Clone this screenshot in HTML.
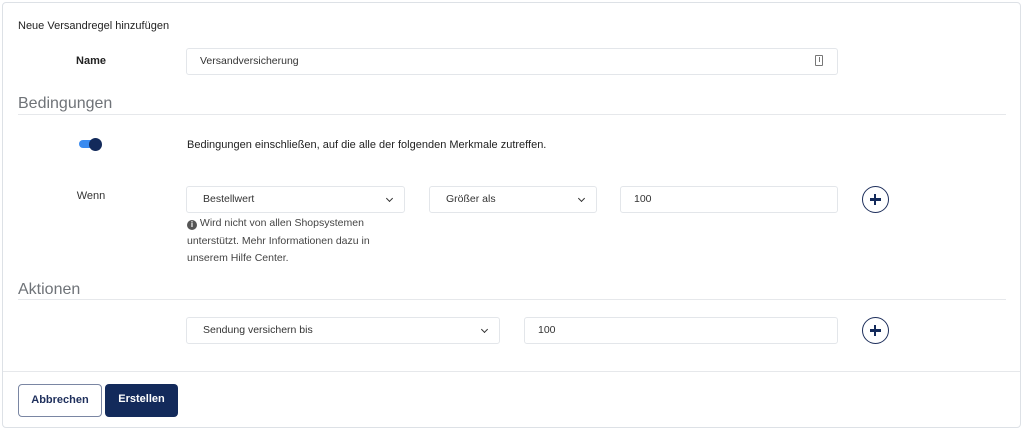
<!DOCTYPE html>
<html><head><meta charset="utf-8"><style>
*{box-sizing:border-box;margin:0;padding:0}
body{width:1024px;height:432px;background:#fff;font-family:"Liberation Sans",sans-serif;font-size:11px;color:#222;position:relative;overflow:hidden}
.a{position:absolute}
.frame{left:2px;top:2px;width:1019px;height:426px;border:1px solid #dde1e6;border-radius:4px}
.inp{position:absolute;border:1px solid #e3e6ea;border-radius:3px;background:#fff;height:27px;line-height:25px;padding-left:13px;font-size:10.5px;color:#333}
.sel{padding-left:16px}
.sel::after{content:"";position:absolute;right:12px;top:9px;width:4px;height:4px;border-right:1.5px solid #333;border-bottom:1.5px solid #333;transform:rotate(45deg)}
.lbl{font-weight:bold;font-size:11px;width:120px;text-align:center;left:31px}
.h{font-size:16px;color:#6f7378;left:18px}
.line{height:1px;background:#e6e8eb;left:18px;width:988px}
.plus{width:27px;height:27px;border:1.5px solid #1e2f5c;border-radius:50%}
.plus::before{content:"";position:absolute;left:6.5px;top:11px;width:11px;height:2.5px;background:#132a5b}
.plus::after{content:"";position:absolute;left:10.8px;top:6.8px;width:2.5px;height:11px;background:#132a5b}
.btn{height:33px;border-radius:4px;font-weight:bold;font-size:11px;text-align:center;line-height:31px}
</style></head><body>
<div class="a frame"></div>
<div class="a" style="left:18px;top:20px;font-size:11px">Neue Versandregel hinzufügen</div>
<div class="a lbl" style="top:55px">Name</div>
<div class="inp" style="left:186px;top:48px;width:652px">Versandversicherung</div>
<div class="a" style="left:815px;top:55px;width:8px;height:11px;border:1px solid #777;border-radius:1px"></div>
<div class="a" style="left:818.5px;top:57px;width:1px;height:5px;background:#777"></div>
<div class="a h" style="top:95px">Bedingungen</div>
<div class="a line" style="top:114px"></div>
<div class="a" style="left:79px;top:140px;width:22px;height:8px;border-radius:4px;background:#3a8bf0"></div>
<div class="a" style="left:89px;top:138px;width:13px;height:13px;border-radius:50%;background:#132a5b"></div>
<div class="a" style="left:187px;top:139px;font-size:11px">Bedingungen einschließen, auf die alle der folgenden Merkmale zutreffen.</div>
<div class="a lbl" style="top:190px;font-weight:normal;color:#333">Wenn</div>
<div class="inp sel" style="left:186px;top:186px;width:219px">Bestellwert</div>
<div class="inp sel" style="left:429px;top:186px;width:168px">Größer als</div>
<div class="inp" style="left:620px;top:186px;width:218px">100</div>
<div class="a plus" style="left:862px;top:186px"></div>
<div class="a" style="left:187px;top:215px;font-size:10.5px;line-height:17.5px;color:#444;width:220px"><span style="display:inline-block;width:10px;height:10px;border-radius:50%;background:#555;color:#fff;font-size:8px;line-height:10px;text-align:center;font-weight:bold;vertical-align:-1px">i</span> Wird nicht von allen Shopsystemen unterstützt. Mehr Informationen dazu in unserem Hilfe Center.</div>
<div class="a h" style="top:281px">Aktionen</div>
<div class="a line" style="top:299px"></div>
<div class="inp sel" style="left:186px;top:317px;width:314px">Sendung versichern bis</div>
<div class="inp" style="left:524px;top:317px;width:314px">100</div>
<div class="a plus" style="left:862px;top:317px"></div>
<div class="a" style="left:3px;top:371px;width:1017px;height:1px;background:#e6e8eb"></div>
<div class="a btn" style="left:18px;top:384px;width:84px;border:1px solid #7a86a3;color:#1e2f5c">Abbrechen</div>
<div class="a btn" style="left:105px;top:384px;width:73px;background:#132a5b;color:#fff">Erstellen</div>
</body></html>
